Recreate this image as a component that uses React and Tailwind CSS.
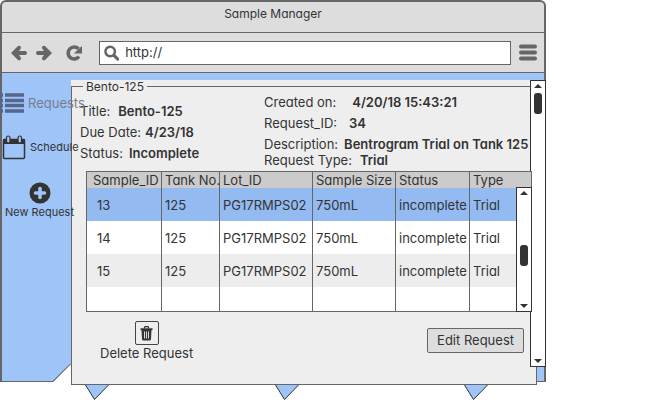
import React from "react";

const samples = [
  { id: 13, tank: 125, lot: "PG17RMPS02", size: "750mL", status: "incomplete", type: "Trial", row: "bg-[#94baf2]" },
  { id: 14, tank: 125, lot: "PG17RMPS02", size: "750mL", status: "incomplete", type: "Trial", row: "bg-white" },
  { id: 15, tank: 125, lot: "PG17RMPS02", size: "750mL", status: "incomplete", type: "Trial", row: "bg-[#ededed]" },
];

function ArrowIcon({ flip }) {
  return (
    <svg width="16" height="16" viewBox="0 0 16 16" className={flip ? "rotate-180" : ""} aria-hidden="true">
      <path d="M0 8 7 1Q8.500 .3 9.700 1.600 10.500 3 9.500 4L8 6h6.500Q16 6.300 16 8t-1.500 2H8l1.500 2q1 1.200 .2 2.400Q8.500 15.700 7 15z" fill="#666" />
    </svg>
  );
}

function ReloadIcon() {
  return (
    <svg width="16" height="16" viewBox="0 0 16 16" aria-hidden="true">
      <path d="M13 11.500A6 6 0 1 1 12.500 3.800" fill="none" stroke="#666" strokeWidth="3.600" />
      <path d="M16 1v7.500H8L10.500 6z" fill="#666" />
    </svg>
  );
}

function SearchIcon() {
  return (
    <svg width="16" height="16" viewBox="0 0 16 16" aria-hidden="true">
      <circle cx="6.500" cy="6.500" r="5" fill="none" stroke="#666" strokeWidth="2.600" />
      <path d="m10.500 10.500 4 4" stroke="#666" strokeWidth="3.200" strokeLinecap="round" />
    </svg>
  );
}

function MenuIcon() {
  return (
    <svg width="18" height="17" viewBox="0 0 18 17" aria-hidden="true">
      <path d="M2 2.500h14M2 8.500h14M2 14.500h14" stroke="#666" strokeWidth="4" strokeLinecap="round" />
    </svg>
  );
}

function ListIcon() {
  return (
    <svg width="24" height="20" viewBox="0 0 24 20" className="shrink-0" aria-hidden="true">
      <path d="M0 2h3M0 7.500h3M0 12.500h3M0 18h3M5 2h19M5 7.500h19M5 12.500h19M5 18h19" stroke="#54678a" strokeWidth="3.400" />
    </svg>
  );
}

function CalendarIcon() {
  return (
    <svg width="24" height="25" viewBox="0 0 24 25" className="shrink-0" aria-hidden="true">
      <rect x="1.500" y="4.500" width="21" height="19" rx="1" fill="none" stroke="#333" strokeWidth="1.500" />
      <path d="M1 4h22v5H1z" fill="#333" />
      <rect x="4.500" y="1" width="3.500" height="7" rx="1.750" fill="#9fc4f8" stroke="#333" strokeWidth="1.200" />
      <rect x="16" y="1" width="3.500" height="7" rx="1.750" fill="#9fc4f8" stroke="#333" strokeWidth="1.200" />
    </svg>
  );
}

function PlusCircleIcon() {
  return (
    <svg width="22" height="22" viewBox="0 0 22 22" aria-hidden="true">
      <circle cx="11" cy="11" r="10.500" fill="#333" />
      <path d="M11 6.500v9M6.500 11h9" stroke="#9fc4f8" strokeWidth="3.600" strokeLinecap="round" />
    </svg>
  );
}

function TrashIcon() {
  return (
    <svg width="13" height="15" viewBox="0 0 13 15" aria-hidden="true">
      <path d="M4.500 2.500V1.500Q4.500 .7 5.300 .7h2.400q.8 0 .8 .8v1" fill="none" stroke="#333" strokeWidth="1.300" />
      <path d="M.5 3.200h12" stroke="#333" strokeWidth="1.800" />
      <path d="M1.500 4h10l-.5 9q-.1 1.500-1.500 1.500h-6Q2.100 14.500 2 13z" fill="#333" />
      <path d="M4.500 5.500v7M6.500 5.500v7M8.500 5.500v7" stroke="#eee" strokeWidth=".9" />
    </svg>
  );
}

function ScrollArrow({ down }) {
  return (
    <svg width="8" height="4" viewBox="0 0 8 4" className={down ? "rotate-180" : ""} aria-hidden="true">
      <path d="M4 0 8 4H0z" fill="#333" />
    </svg>
  );
}

function ScrollBar({ className, thumb, label }) {
  return (
    <div className={`absolute flex w-4 flex-col items-center border border-[#333] bg-white py-[3px] ${className}`} role="scrollbar" aria-label={label} aria-valuenow={0} aria-controls="request">
      <ScrollArrow />
      <div className={`h-[21px] w-2 rounded-[3px] bg-[#333] ${thumb}`} />
      <div className="mt-auto"><ScrollArrow down /></div>
    </div>
  );
}

function Field({ label, value, height = "h-[21px]", gap = "gap-2" }) {
  return (
    <div className={`flex leading-[18px] whitespace-nowrap ${height} ${gap}`}>
      <dt>{label}</dt>
      <dd className="font-semibold">{value}</dd>
    </div>
  );
}

function SampleTable() {
  const line = "border-r border-[#666]";
  return (
    <div className="relative z-20 mr-1 ml-[14px] h-[141px] border border-[#666] bg-white">
      <table className="h-full w-full table-fixed border-separate border-spacing-0 text-left text-[13px] whitespace-nowrap">
        <colgroup>
          <col className="w-[75px]" />
          <col className="w-[58px]" />
          <col className="w-[93px]" />
          <col className="w-[83px]" />
          <col className="w-[74px]" />
          <col />
        </colgroup>
        <thead>
          <tr className="h-4 bg-[#cbcbcb] leading-4">
            <th className={`${line} p-0 pl-[6px] font-normal`}>Sample_ID</th>
            <th className={`${line} p-0 pl-[3px] font-normal`}>Tank No.</th>
            <th className={`${line} p-0 pl-[3px] font-normal`}>Lot_ID</th>
            <th className={`${line} p-0 pl-[3px] font-normal`}>Sample Size</th>
            <th className={`${line} p-0 pl-[3px] font-normal`}>Status</th>
            <th className="p-0 pl-[3px] font-normal">Type</th>
          </tr>
        </thead>
        <tbody>
          {samples.map((s) => (
            <tr key={s.id} className={`h-[33px] ${s.row}`}>
              <td className={`${line} p-0 pt-[2px] pl-[10px]`}>{s.id}</td>
              <td className={`${line} p-0 pt-[2px] pl-[3px]`}>{s.tank}</td>
              <td className={`${line} p-0 pt-[2px] pl-[3px]`}>{s.lot}</td>
              <td className={`${line} p-0 pt-[2px] pl-[3px]`}>{s.size}</td>
              <td className={`${line} p-0 pt-[2px] pl-[3px]`}>{s.status}</td>
              <td className="p-0 pt-[2px] pl-[3px]">{s.type}</td>
            </tr>
          ))}
          <tr>
            <td className={`${line} p-0`} />
            <td className={`${line} p-0`} />
            <td className={`${line} p-0`} />
            <td className={`${line} p-0`} />
            <td className={`${line} p-0`} />
            <td className="p-0" />
          </tr>
        </tbody>
      </table>
      <ScrollBar className="top-[15px] -right-px -bottom-px" thumb="mt-[50px]" label="Samples" />
    </div>
  );
}

function Sidebar() {
  return (
    <nav className="relative z-10 flex w-[69px] shrink-0 flex-col items-start whitespace-nowrap">
      <a href="#requests" className="-ml-[2px] mt-5 flex items-center gap-1 text-[13px] leading-5 text-[#777c8c]">
        <ListIcon />
        Requests
      </a>
      <a href="#schedule" className="mt-[22px] flex items-center gap-1 text-[11px]">
        <CalendarIcon />
        Schedule
      </a>
      <a href="#new" className="mt-[22px] ml-[3px] flex flex-col items-center text-[11px] leading-4">
        <PlusCircleIcon />
        New Request
      </a>
      <svg width="18" height="19" viewBox="0 0 18 19" className="mt-auto -mb-px self-end" aria-hidden="true">
        <path d="M0 19 18 0v19z" fill="#fff" />
        <path d="M0 18.500 18 .5" stroke="#333" />
      </svg>
    </nav>
  );
}

function Pointer() {
  return (
    <svg width="24" height="15" viewBox="0 0 24 15" aria-hidden="true">
      <path d="M.5 0 9.500 14.500 23.500 0" fill="#9fc4f8" stroke="#333" />
    </svg>
  );
}

export default function App() {
  return (
    <div className="min-h-screen bg-white pr-[105px] font-['Inter','Liberation_Sans',sans-serif] text-[12px] text-[#333] [font-feature-settings:'cv11']">
      <div className="rounded-t-md border-x-2 border-t-2 border-[#666] bg-[#ddd]">
        <header>
          <h1 className="h-[30px] pt-[2px] text-center text-[12px] leading-5">Sample Manager</h1>
          <div className="flex h-[41px] items-center border-y border-[#666] pr-[7px] pl-[9px]">
            <button aria-label="Back"><ArrowIcon /></button>
            <button aria-label="Forward" className="ml-[9px]"><ArrowIcon flip /></button>
            <button aria-label="Reload" className="ml-[14px]"><ReloadIcon /></button>
            <label className="ml-[17px] flex h-6 flex-1 items-center gap-[6px] border border-[#666] bg-white pl-1">
              <SearchIcon />
              <input aria-label="Address" type="text" defaultValue="http://" className="w-full min-w-0 text-[13px] outline-none" />
            </label>
            <button aria-label="Menu" className="ml-2"><MenuIcon /></button>
          </div>
        </header>

        <main className="flex border-b border-[#666] bg-[#9fc4f8] pr-[7px]">
          <Sidebar />
          <div id="request" className="relative mt-[7px] -mb-1 min-w-0 flex-1 bg-[#eee]">
            <fieldset className="min-w-0 border border-[#666]">
              <legend className="ml-[11px] px-[3px] leading-[13px]">Bento-125</legend>
              <div className="flex h-[78px] pl-2 text-[13px]">
                <dl className="w-[184px] pt-[9px]">
                  <Field label="Title:" value="Bento-125" />
                  <Field label="Due Date:" value="4/23/18" gap="gap-1" />
                  <Field label="Status:" value="Incomplete" gap="gap-[6px]" />
                </dl>
                <dl>
                  <Field label="Created on:" value="4/20/18 15:43:21" gap="gap-4" />
                  <Field label="Request_ID:" value="34" gap="gap-3" />
                  <Field label="Description:" value="Bentrogram Trial on Tank 125" height="h-4" gap="gap-[6px]" />
                  <Field label="Request Type:" value="Trial" />
                </dl>
              </div>
              <SampleTable />
              <div className="flex h-[72px] items-start justify-between pr-3 pl-7 text-[13px]">
                <button className="flex flex-col items-center pt-[9px] leading-4">
                  <span className="flex size-6 items-center justify-center rounded-[2px] border border-[#444]"><TrashIcon /></span>
                  Delete Request
                </button>
                <button className="mt-4 h-[25px] rounded-[2px] border border-[#666] bg-[#ddd] px-[9px]">Edit Request</button>
              </div>
            </fieldset>
            <ScrollBar className="top-0 -right-[9px] bottom-[18px]" thumb="mt-[5px]" label="Request" />
          </div>
        </main>
      </div>
      <div className="mt-[3px] flex justify-between pr-[58px] pl-[85px]">
        <Pointer />
        <Pointer />
        <Pointer />
      </div>
    </div>
  );
}
